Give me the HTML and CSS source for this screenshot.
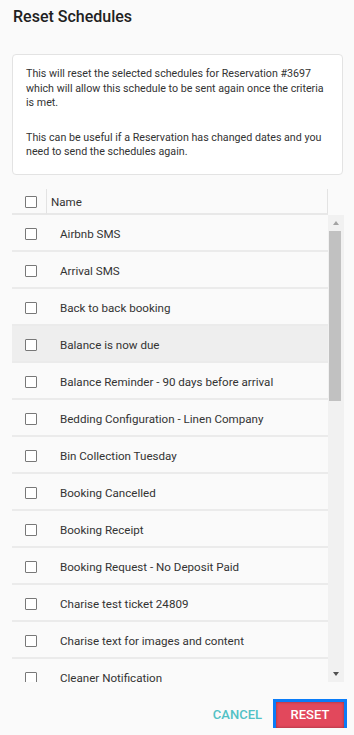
FILE: index.html
```
<!DOCTYPE html>
<html><head>
<meta charset="utf-8">
<title>Reset Schedules</title>
<link rel="stylesheet" href="styles.css">
</head>
<body>
<div class="dialog">
	<h1 class="dialog-title">Reset Schedules</h1>

	<div class="notice">
		<p>This will reset the selected schedules for Reservation #3697 which will allow this schedule to be sent again once the criteria is met.</p>
		<p>This can be useful if a Reservation has changed dates and you need to send the schedules again.</p>
	</div>

	<div class="grid">
		<div class="grid-head">
			<div class="cell cell-check"><span class="box"></span></div>
			<div class="cell cell-name">Name</div>
			<div class="head-spacer"></div>
		</div>
		<div class="grid-body">
			<div class="rows">
				<div class="row"><div class="cell cell-check"><span class="box"></span></div><div class="cell cell-name">Airbnb SMS</div></div>
				<div class="row"><div class="cell cell-check"><span class="box"></span></div><div class="cell cell-name">Arrival SMS</div></div>
				<div class="row"><div class="cell cell-check"><span class="box"></span></div><div class="cell cell-name">Back to back booking</div></div>
				<div class="row hover"><div class="cell cell-check"><span class="box"></span></div><div class="cell cell-name">Balance is now due</div></div>
				<div class="row"><div class="cell cell-check"><span class="box"></span></div><div class="cell cell-name">Balance Reminder - 90 days before arrival</div></div>
				<div class="row"><div class="cell cell-check"><span class="box"></span></div><div class="cell cell-name">Bedding Configuration - Linen Company</div></div>
				<div class="row"><div class="cell cell-check"><span class="box"></span></div><div class="cell cell-name">Bin Collection Tuesday</div></div>
				<div class="row"><div class="cell cell-check"><span class="box"></span></div><div class="cell cell-name">Booking Cancelled</div></div>
				<div class="row"><div class="cell cell-check"><span class="box"></span></div><div class="cell cell-name">Booking Receipt</div></div>
				<div class="row"><div class="cell cell-check"><span class="box"></span></div><div class="cell cell-name">Booking Request - No Deposit Paid</div></div>
				<div class="row"><div class="cell cell-check"><span class="box"></span></div><div class="cell cell-name">Charise test ticket 24809</div></div>
				<div class="row"><div class="cell cell-check"><span class="box"></span></div><div class="cell cell-name">Charise text for images and content</div></div>
				<div class="row"><div class="cell cell-check"><span class="box"></span></div><div class="cell cell-name">Cleaner Notification</div></div>
			</div>
			<div class="scrollbar">
				<div class="sb-btn sb-up"></div>
				<div class="sb-track"><div class="sb-thumb"></div></div>
				<div class="sb-btn sb-down"></div>
			</div>
		</div>
	</div>

	<div class="actions">
		<button class="btn btn-flat">Cancel</button>
		<button class="btn btn-raised">Reset</button>
	</div>
</div>
</body>
</html>
```
FILE: styles.css
```
body {
	margin: 0;
	background: #fafafa;
	font-family: Roboto, "Liberation Sans", Arial, sans-serif;
	color: #333;
}
.dialog {
	padding: 0 10px 0 12px;
}
.dialog-title {
	margin: 0;
	padding: 7px 0 0 1px;
	font-size: 16px;
	font-weight: 500;
	line-height: 20px;
	color: #212121;
}

/* info box */
.notice {
	margin: 27px 1px 0 0;
	padding: 12px 10px 14px 13px;
	background: #fff;
	border: 1px solid #e3e3e3;
	border-radius: 4px;
	font-size: 10.7px;
	line-height: 14.6px;
}
.notice p { margin: 0; }
.notice p + p { margin-top: 20px; }

/* table */
.grid {
	margin-top: 14px;
	font-size: 11.6px;
}
.grid-head {
	display: flex;
	height: 26px;
}
.grid-head .cell {
	height: 24px;
	box-sizing: border-box;
	padding-top: 2px;
	border-bottom: 2px solid #e8e8e8;
	display: flex;
	align-items: center;
}
.grid-head .cell-check {
	height: 26px;
	padding-left: 13px;
	border-right: 1px solid #e3e3e3;
}
.grid-head .cell-name {
	flex: 1;
	height: 26px;
	padding-left: 4px;
	border-right: 1px solid #e3e3e3;
}
.head-spacer { width: 16px; }

.cell-check {
	width: 35px;
	box-sizing: border-box;
	padding-left: 13px;
	flex: none;
}
.box {
	display: block;
	width: 12px;
	height: 12px;
	box-sizing: border-box;
	border: 1.5px solid #787878;
	border-radius: 1px;
	background: #fff;
}

.grid-body {
	display: flex;
	height: 467px;
}
.rows {
	flex: 1;
	overflow: hidden;
}
.row {
	display: flex;
	align-items: center;
	height: 37px;
	box-sizing: border-box;
	padding-top: 3px;
	border-bottom: 2px solid #ebebeb;
}
.row .cell-name {
	padding-left: 13px;
	white-space: nowrap;
}
.row.hover { background: #eee; }

/* fake scrollbar */
.scrollbar {
	width: 16px;
	background: #f1f1f1;
	display: flex;
	flex-direction: column;
}
.sb-btn {
	height: 16px;
	display: flex;
	align-items: center;
	justify-content: center;
}
.sb-up::before, .sb-down::before {
	content: "";
	border-left: 3.5px solid transparent;
	border-right: 3.5px solid transparent;
}
.sb-up::before { border-bottom: 4px solid #a3a3a3; }
.sb-down::before { border-top: 4px solid #505050; }
.sb-track {
	flex: 1;
	padding: 0 3px 0 1px;
}
.sb-thumb {
	height: 170px;
	background: #c1c1c1;
}

/* buttons */
.actions {
	display: flex;
	justify-content: flex-end;
	align-items: center;
	margin-top: 20px;
}
.btn {
	font-family: Roboto, "Liberation Sans", Arial, sans-serif;
	font-size: 13px;
	font-weight: 500;
	text-transform: uppercase;
	border: 0;
	background: none;
	cursor: pointer;
}
.btn-flat {
	color: #52c1c5;
	padding: 0 8px;
	height: 26px;
	margin-right: 6px;
}
.btn-raised {
	color: #fff;
	background: #e2485c;
	width: 68px;
	height: 26px;
	padding: 0;
	box-shadow: 0 0 0 3px #0a7cf8, inset 0 0 3px rgba(0,0,0,.35);
}
```
